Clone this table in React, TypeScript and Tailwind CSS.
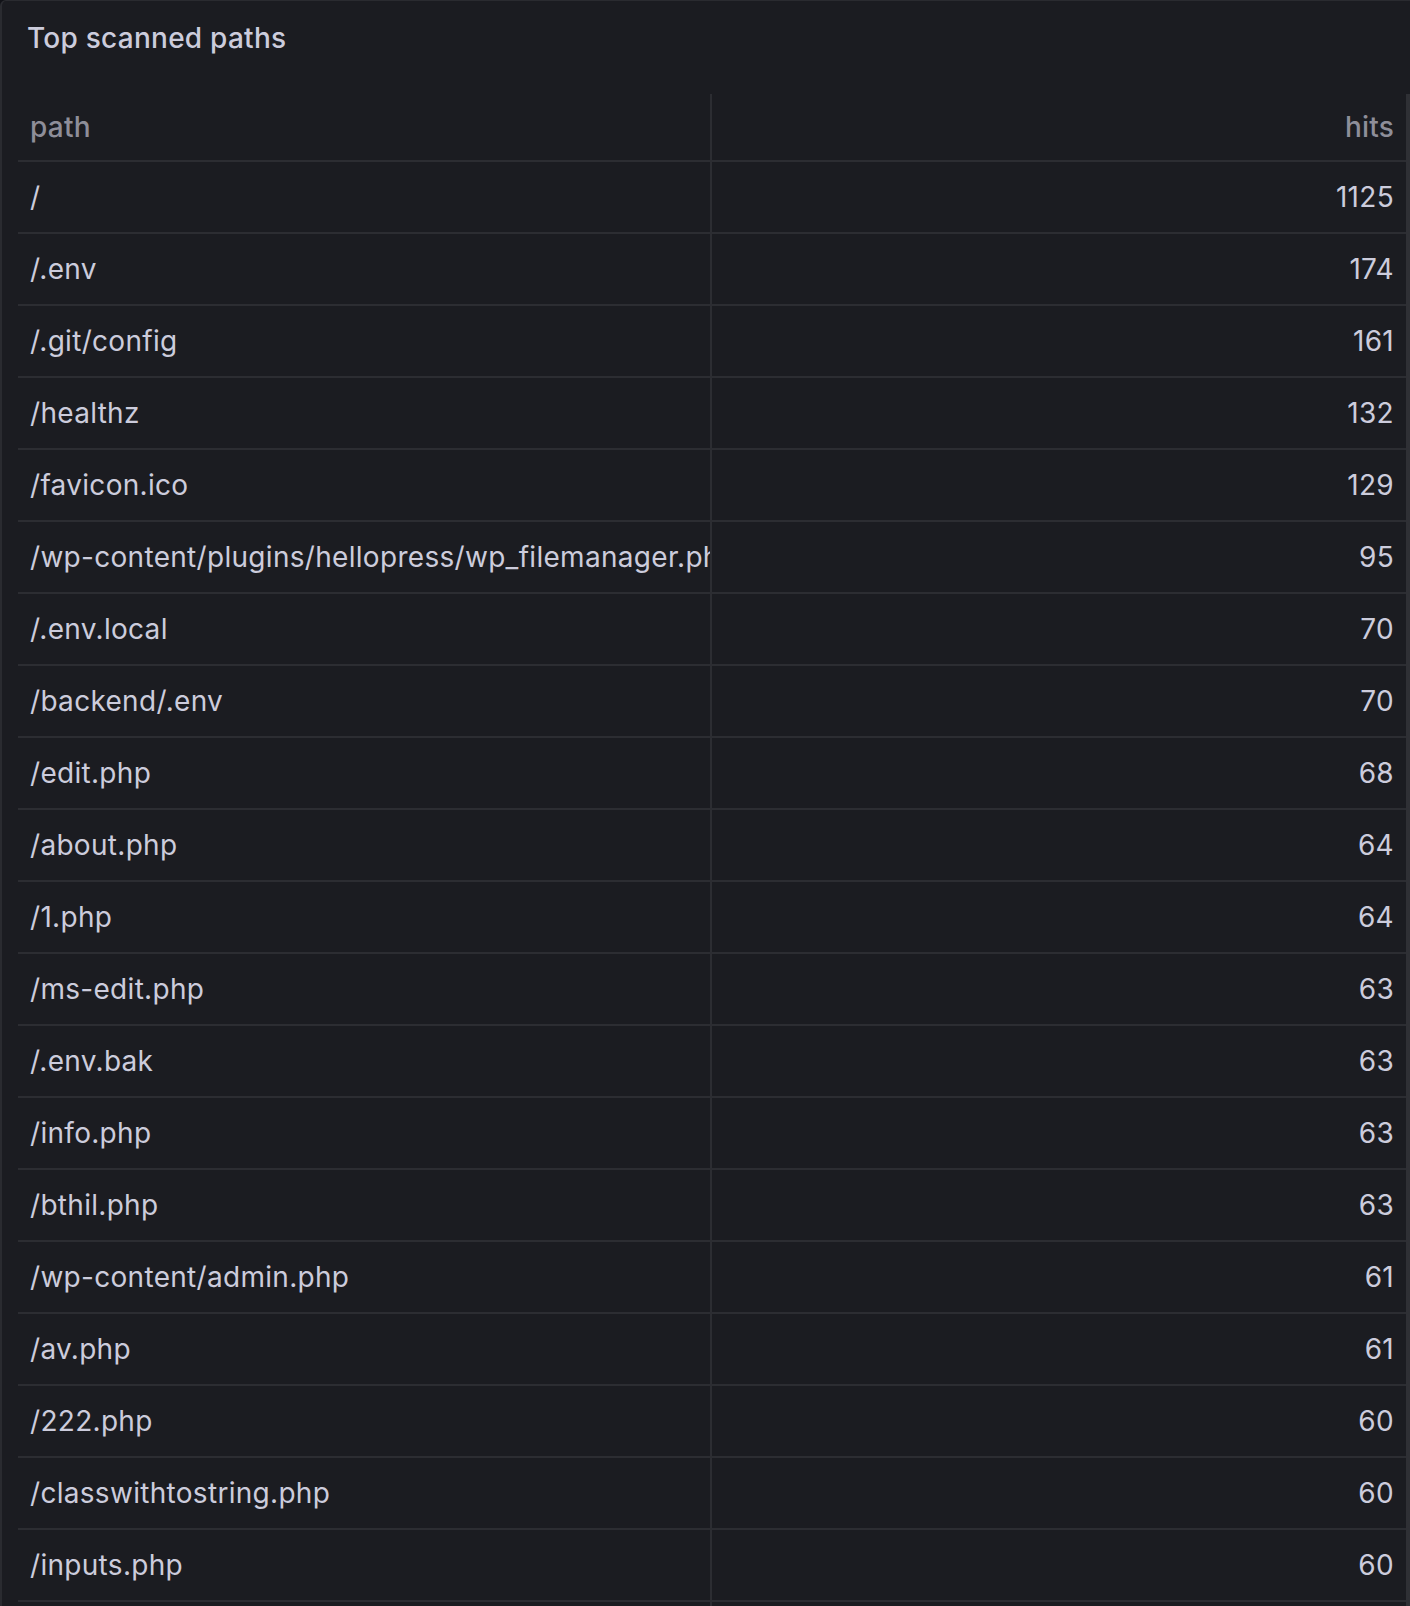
const rows: [string, number][] = [
  ["/", 1125],
  ["/.env", 174],
  ["/.git/config", 161],
  ["/healthz", 132],
  ["/favicon.ico", 129],
  ["/wp-content/plugins/hellopress/wp_filemanager.php", 95],
  ["/.env.local", 70],
  ["/backend/.env", 70],
  ["/edit.php", 68],
  ["/about.php", 64],
  ["/1.php", 64],
  ["/ms-edit.php", 63],
  ["/.env.bak", 63],
  ["/info.php", 63],
  ["/bthil.php", 63],
  ["/wp-content/admin.php", 61],
  ["/av.php", 61],
  ["/222.php", 60],
  ["/classwithtostring.php", 60],
  ["/inputs.php", 60],
];

export default function App() {
  return (
    <div
      className="h-[1606px] w-[1410px] overflow-hidden bg-[#111217]"
      style={{ fontFamily: "Inter, 'Noto Sans', sans-serif" }}
    >
      <div className="flex h-full flex-col rounded-tl-[6px] border-l-2 border-t border-[#2a2b30] bg-[#1b1c21]">
        <h2 className="pl-[25px] pt-[20px] text-[28px] font-medium leading-[34px] tracking-[0.25px] text-[#ccccdc]">
          Top scanned paths
        </h2>

        <div className="mt-[39px] ml-[16px] flex flex-1">
          <div className="flex flex-1 flex-col">
            {/* header */}
            <div className="flex h-[68px] border-b-2 border-[#2c2d32] text-[28px] font-medium tracking-[0.2px] text-[#8e8e99]">
              <div className="flex w-[694px] items-center border-r-2 border-[#2c2d32] pl-[12px]">
                path
              </div>
              <div className="flex flex-1 items-center justify-end pr-[12px]">
                hits
              </div>
            </div>

            {rows.map(([path, hits]) => (
              <div
                key={path}
                className="flex h-[72px] border-b-2 border-[#2c2d32] text-[28px] tracking-[0.3px] text-[#ccccdc]"
              >
                <div className="flex w-[694px] items-center overflow-hidden whitespace-nowrap border-r-2 border-[#2c2d32] pl-[12px]">
                  {path}
                </div>
                <div className="flex flex-1 items-center justify-end pr-[12px]">
                  {hits}
                </div>
              </div>
            ))}

            {/* rest of the column divider below the last visible row */}
            <div className="flex-1">
              <div className="h-full w-[694px] border-r-2 border-[#2c2d32]" />
            </div>
          </div>
          <div className="w-[4px] bg-[#2f3035]" />
        </div>
      </div>
    </div>
  );
}
